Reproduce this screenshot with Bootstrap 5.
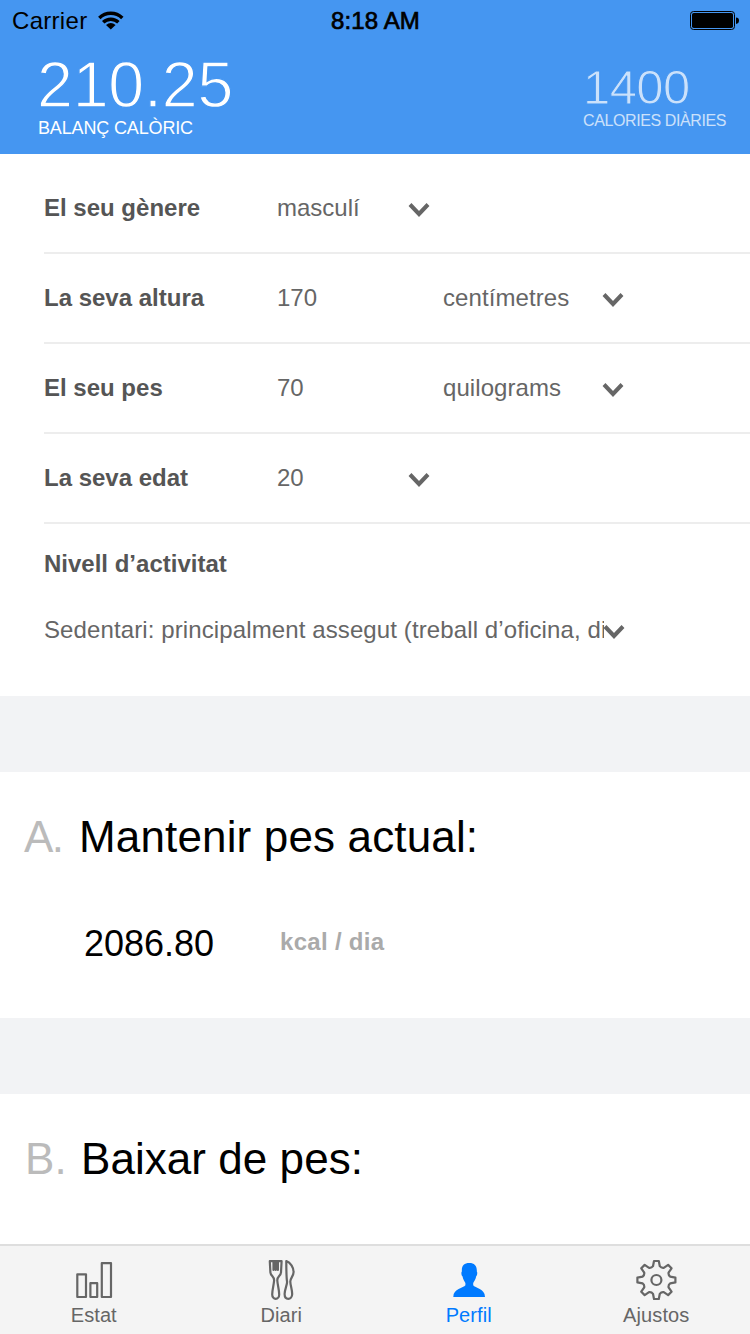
<!DOCTYPE html>
<html lang="ca">
<head>
<meta charset="utf-8">
<meta name="viewport" content="width=device-width, initial-scale=1">
<title>Perfil</title>
<link href="https://cdn.jsdelivr.net/npm/bootstrap@5.3.0/dist/css/bootstrap.min.css" rel="stylesheet">
<style>
  body { font-family: "Liberation Sans", Arial, sans-serif; font-size: 24px; line-height: 30px; color: #000; height: 1334px; overflow: hidden; }
  svg { display: block; flex: none; }
  .app-header { background: #4596f1; height: 154px; }
  .status { height: 40px; padding: 2px 11px 0 12px; }
  .status > div { flex: 1 1 0; }
  .carrier { letter-spacing: .3px; }
  .wifi { margin-left: 9px; }
  .clock { -webkit-text-stroke: .7px #000; letter-spacing: .1px; }
  .totals { padding: 12px 24px 0 38px; }
  /* a header-coloured outline trims the digits to a light weight */
  .big-num { white-space: nowrap; -webkit-text-stroke: 1.3px #4596f1; }
  .balance .big-num { font-size: 64.5px; line-height: 62px; letter-spacing: -.2px; margin-left: -1px; padding-top: 2px; }
  .balance .caption-text { font-size: 18px; line-height: 24px; letter-spacing: -.15px; }
  .daily { padding-top: 12px; opacity: .72; }
  .daily .big-num { font-size: 49px; line-height: 46px; letter-spacing: -.6px; -webkit-text-stroke-width: 1px; }
  .daily .caption-text { font-size: 16px; line-height: 20px; letter-spacing: -.4px; margin-top: 1px; }
  .profile-form { padding: 10px 0 0 44px; height: 542px; color: #666; }
  .field { height: 90px; border-bottom: 2px solid #ededed; }
  .field-label { color: #555; font-weight: 700; }
  .field .field-label { width: 233px; }
  .val-short { width: 131px; }
  .val-wide { width: 166px; }
  .val-unit { width: 159px; letter-spacing: .08px; }
  .activity { padding-top: 25px; }
  .activity-row { margin-top: 36px; }
  .activity-row .chev { margin-left: -1px; }
  .activity-value { width: 560px; overflow: hidden; white-space: nowrap; letter-spacing: .11px; }
  .chev { fill: none; stroke: #666; stroke-width: 4; margin-top: 4px; }
  .spacer { height: 76px; background: #f2f3f5; }
  .goal { padding: 40px 24px 0; }
  .goal-title { font-size: 44px; line-height: 50px; letter-spacing: .15px; }
  .goal-title .letter { color: #bbb; width: 55px; }
  .goal-a { height: 246px; }
  .goal-a .letter { letter-spacing: -1.5px; }
  .goal-b { height: 150px; padding-left: 25px; }
  .goal-b .goal-title { letter-spacing: .05px; }
  .goal-b .letter { width: 56px; }
  .goal-row { margin-top: 62px; padding-left: 60px; }
  .amount { font-size: 36px; line-height: 40px; width: 196px; }
  .unit { color: #aaa; font-weight: 700; letter-spacing: .3px; margin-top: 3px; }
  .tabs { height: 90px; background: #f4f4f4; border-top: 2px solid #dedede; color: #666; font-size: 20px; line-height: 24px; }
  .tabs > a { color: inherit; text-decoration: none; padding-top: 12px; letter-spacing: .1px; }
  .tabs > a.active { color: #007aff; }
  .tabs span { margin-top: 1px; }
  .tabs svg { fill: none; stroke: currentColor; stroke-width: 2.2; stroke-linejoin: round; stroke-linecap: round; }
</style>
</head>
<body class="bg-white d-flex flex-column">
<header class="app-header">
  <div class="status d-flex align-items-center">
    <div class="d-flex align-items-center"><span class="carrier">Carrier</span>
      <svg class="wifi" width="30" height="22" viewBox="96 10 30 22"><g fill="none" stroke="#000" stroke-width="3.5"><path d="M99.3 18A16.5 16.5 0 0 1 122.3 18"/><path d="M103.2 22.2A11 11 0 0 1 118.4 22.2"/></g><path d="M106 25.1Q110.8 20.9 115.6 25.1L110.8 29.6Z"/></svg>
    </div>
    <div class="text-center clock">8:18 AM</div>
    <div class="d-flex justify-content-end"><svg width="49" height="20" viewBox="0 0 49 20"><rect x=".5" y=".5" width="44" height="18" rx="3" fill="none" stroke="#000"/><rect x="2" y="2" width="41" height="15" rx="1.8"/><path d="M46 6.5Q49 6.5 49 9.5T46 13Z"/></svg></div>
  </div>
  <div class="totals d-flex justify-content-between text-white">
    <div class="balance"><div class="big-num">210.25</div><div class="caption-text">BALANÇ CALÒRIC</div></div>
    <div class="daily"><div class="big-num">1400</div><div class="caption-text">CALORIES DIÀRIES</div></div>
  </div>
</header>

<section class="profile-form">
  <div class="field d-flex align-items-center"><div class="field-label">El seu gènere</div><div class="val-short">masculí</div>
    <svg class="chev" width="22" height="16" viewBox="0 0 22 16"><path d="M2 2.5L11 12L20 2.5"/></svg></div>
  <div class="field d-flex align-items-center"><div class="field-label">La seva altura</div><div class="val-wide">170</div><div class="val-unit">centímetres</div>
    <svg class="chev" width="22" height="16" viewBox="0 0 22 16"><path d="M2 2.5L11 12L20 2.5"/></svg></div>
  <div class="field d-flex align-items-center"><div class="field-label">El seu pes</div><div class="val-wide">70</div><div class="val-unit">quilograms</div>
    <svg class="chev" width="22" height="16" viewBox="0 0 22 16"><path d="M2 2.5L11 12L20 2.5"/></svg></div>
  <div class="field d-flex align-items-center"><div class="field-label">La seva edat</div><div class="val-short">20</div>
    <svg class="chev" width="22" height="16" viewBox="0 0 22 16"><path d="M2 2.5L11 12L20 2.5"/></svg></div>
  <div class="activity">
    <div class="field-label">Nivell d’activitat</div>
    <div class="d-flex align-items-center activity-row"><div class="activity-value">Sedentari: principalment assegut (treball d’oficina, di</div>
      <svg class="chev" width="22" height="16" viewBox="0 0 22 16"><path d="M2 2.5L11 12L20 2.5"/></svg></div>
  </div>
</section>
<div class="spacer"></div>
<section class="goal goal-a">
  <div class="goal-title d-flex"><span class="letter">A.</span><span>Mantenir pes actual:</span></div>
  <div class="d-flex align-items-start goal-row"><span class="amount">2086.80</span><span class="unit">kcal / dia</span></div>
</section>
<div class="spacer"></div>
<section class="goal goal-b">
  <div class="goal-title d-flex"><span class="letter">B.</span><span>Baixar de pes:</span></div>
</section>

<nav class="tabs d-flex">
  <a href="#" class="col-3 d-flex flex-column align-items-center">
    <svg width="44" height="44" viewBox="0 0 44 44"><path d="M5.3 16.3H14V39H5.3ZM18.4 25.2H25.2V39H18.4ZM29.8 5.2H39V39H29.8Z"/></svg><span>Estat</span></a>
  <a href="#" class="col-3 d-flex flex-column align-items-center">
    <svg width="44" height="44" viewBox="0 0 44 44"><path d="M10.8 3.2H22.6L22 14.5C21.8 18 18 18.5 18.3 22.5C18.6 27 20.2 32 20.2 36.5C20.2 39 18.6 40.8 16.7 40.8S13.2 39 13.2 36.5C13.2 32 14.8 27 15.1 22.5C15.4 18.5 11.6 18 11.4 14.5ZM14.5 3.5V12M16.7 3.5V12M18.9 3.5V12"/><path d="M27.3 3C31.5 4.5 34.6 9.5 34.6 14C34.6 18 31.3 20 31.3 23.5C31.3 27 33.2 32 33.2 36C33.2 39 31.3 40.8 29.3 40.8S25.6 39 25.6 36C25.6 32 28.1 27 28.1 24C27.4 20 27.3 12 27.3 3Z"/></svg><span>Diari</span></a>
  <a href="#" class="col-3 d-flex flex-column align-items-center active">
    <svg width="44" height="44" viewBox="0 0 44 44"><path fill="currentColor" stroke="none" d="M22.3 5C27.5 5 30.2 8 29.8 13.5C30.6 14 30.3 17.5 29.2 18.3C28.7 21.5 27 23.5 26.2 25V27.3C28 30 38 30.5 38 39H6.3C6.3 30.5 16.6 30 18.4 27.3V25C17.6 23.5 16 21.5 15.5 18.3C14.3 17.5 14 14 14.9 13.5C14.4 8 17 5 22.3 5Z"/></svg><span>Perfil</span></a>
  <a href="#" class="col-3 d-flex flex-column align-items-center">
    <svg width="44" height="44" viewBox="-22.4 -22 44 44"><circle r="5"/><path d="M13.8 -3.4L19 -2.4V2.4L13.8 3.4Q11.8 4.9 12.16 7.35L15.13 11.74L11.74 15.13L7.35 12.16Q4.9 11.8 3.4 13.8L2.4 19H-2.4L-3.4 13.8Q-4.9 11.8 -7.35 12.16L-11.74 15.13L-15.13 11.74L-12.16 7.35Q-11.8 4.9 -13.8 3.4L-19 2.4V-2.4L-13.8 -3.4Q-11.8 -4.9 -12.16 -7.35L-15.13 -11.74L-11.74 -15.13L-7.35 -12.16Q-4.9 -11.8 -3.4 -13.8L-2.4 -19H2.4L3.4 -13.8Q4.9 -11.8 7.35 -12.16L11.74 -15.13L15.13 -11.74L12.16 -7.35Q11.8 -4.9 13.8 -3.4Z"/></svg><span>Ajustos</span></a>
</nav>
<script src="https://cdn.jsdelivr.net/npm/bootstrap@5.3.0/dist/js/bootstrap.bundle.min.js"></script>
</body>
</html>
